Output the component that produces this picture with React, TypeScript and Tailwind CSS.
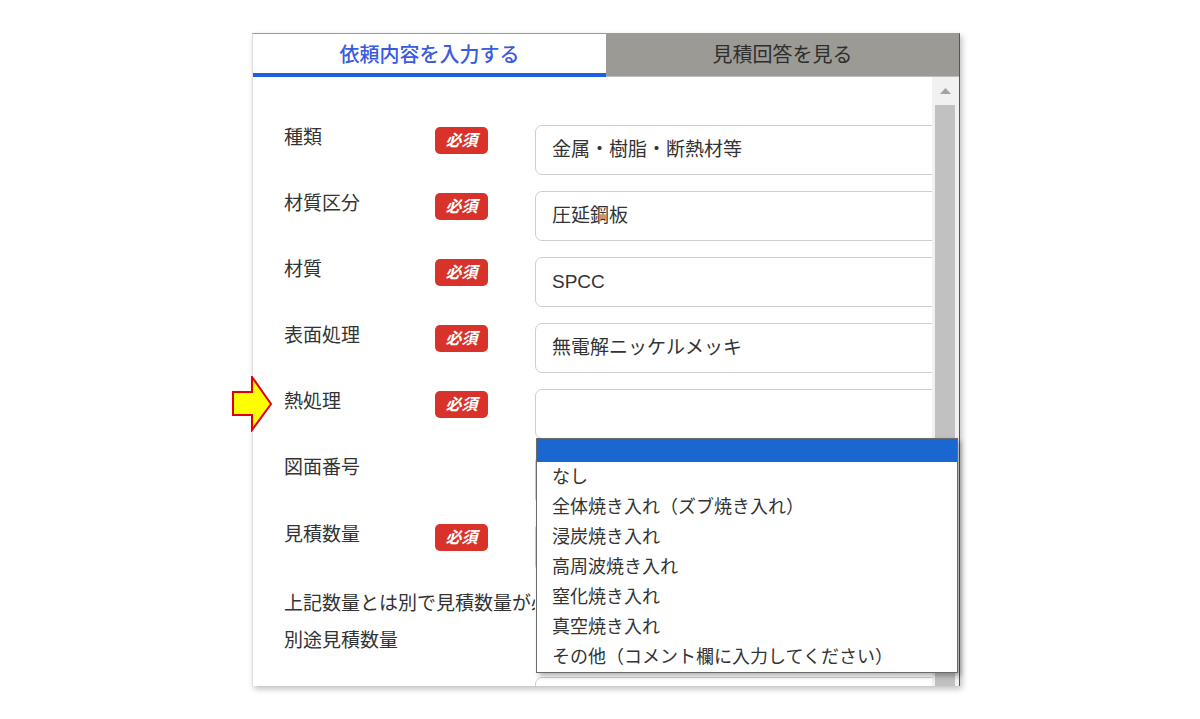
import React from "react";

interface Row {
  label: string;
  required: boolean;
  value: string;
}

const rows: Row[] = [
  { label: "種類", required: true, value: "金属・樹脂・断熱材等" },
  { label: "材質区分", required: true, value: "圧延鋼板" },
  { label: "材質", required: true, value: "SPCC" },
  { label: "表面処理", required: true, value: "無電解ニッケルメッキ" },
  { label: "熱処理", required: true, value: "" },
  { label: "図面番号", required: false, value: "" },
  { label: "見積数量", required: true, value: "" },
];

const options = [
  "なし",
  "全体焼き入れ（ズブ焼き入れ）",
  "浸炭焼き入れ",
  "高周波焼き入れ",
  "窒化焼き入れ",
  "真空焼き入れ",
  "その他（コメント欄に入力してください）",
];

function RequiredBadge() {
  return (
    <span className="mt-[2px] flex h-[27px] w-[53px] items-center justify-center rounded-[5px] bg-[#d8322a] text-[16px] font-bold italic leading-none text-white">
      必須
    </span>
  );
}

function FormRow({ row, className }: { row: Row; className?: string }) {
  return (
    <div className={`flex items-start ${className ?? ""}`}>
      <div className="-mt-px w-[151px] shrink-0 text-[19px] leading-[28px] text-[#333]">
        {row.label}
      </div>
      <div className="w-[100px] shrink-0">{row.required && <RequiredBadge />}</div>
      <div className="flex h-[50px] w-[440px] shrink-0 items-center rounded-[7px] border border-[#cfcfcf] bg-white px-[16px] text-[19px] text-[#333]">
        {row.value}
      </div>
    </div>
  );
}

function Scrollbar() {
  return (
    <div className="flex w-[27px] shrink-0 flex-col bg-[#f1f1f1]">
      <div className="flex h-[28px] items-center justify-center pr-[1px]">
        <svg width="11" height="6" viewBox="0 0 11 6">
          <polygon points="0,6 5.5,0 11,6" fill="#a3a3a3" />
        </svg>
      </div>
      <div className="ml-[3px] w-[20px] flex-1 bg-[#c1c1c1]" />
    </div>
  );
}

function Dropdown() {
  return (
    <div className="absolute left-[283px] top-[404px] w-[422px] border border-[#6a6a6a] bg-white shadow-[3px_3px_5px_rgba(0,0,0,0.3)]">
      <div className="h-[23px] bg-[#1b67d2]" />
      {options.map((o) => (
        <div key={o} className="h-[30px] pl-[15px] text-[18px] leading-[30px] text-[#333]">
          {o}
        </div>
      ))}
    </div>
  );
}

export default function App() {
  return (
    <div className="relative h-[719px] w-[1200px] overflow-hidden bg-white font-['Liberation_Sans','Noto_Sans_CJK_JP',sans-serif]">
      <div className="relative ml-[252px] mt-[33px] flex h-[653px] w-[708px] flex-col border-l border-r border-t border-l-[#dcdcdc] border-r-[#555] border-t-[#9a9a9a] bg-white shadow-[2px_3px_6px_rgba(0,0,0,0.25)]">
        <div className="flex h-[43px] shrink-0">
          <div className="flex flex-1 items-center justify-center border-b-4 border-[#1f5fe6] pt-[3px] text-[20px] font-medium text-[#3a5bdf]">
            依頼内容を入力する
          </div>
          <div className="flex flex-1 items-center justify-center border-b border-[#bdbdbd] bg-[#9c9a94] text-[20px] text-[#2e2e2e]">
            見積回答を見る
          </div>
        </div>

        <div className="flex min-h-0 flex-1">
          <div className="min-w-0 flex-1 overflow-hidden pl-[31px] pt-[48px]">
            {rows.map((r, i) => (
              <FormRow key={r.label} row={r} className={i === 6 ? "mt-[17px]" : i > 0 ? "mt-[16px]" : ""} />
            ))}
            <div className="mt-[18px] w-[251px] overflow-hidden whitespace-nowrap text-[19px] leading-[28px] text-[#333]">
              上記数量とは別で見積数量が必要な場合はご入力ください
            </div>
            <div className="mt-[9px] text-[19px] leading-[28px] text-[#333]">別途見積数量</div>
            <div className="ml-[251px] mt-[22px] h-[50px] w-[440px] rounded-[7px] border border-[#cfcfcf]" />
          </div>
          <Scrollbar />
        </div>

        <Dropdown />
      </div>

      <svg className="absolute left-[232px] top-[376px]" width="42" height="56" viewBox="0 0 42 56">
        <polygon points="1,16 20,16 20,1 39,28 20,54 20,39 1,39" fill="#ffff00" stroke="#e00000" strokeWidth="2" strokeLinejoin="miter" />
      </svg>
    </div>
  );
}
